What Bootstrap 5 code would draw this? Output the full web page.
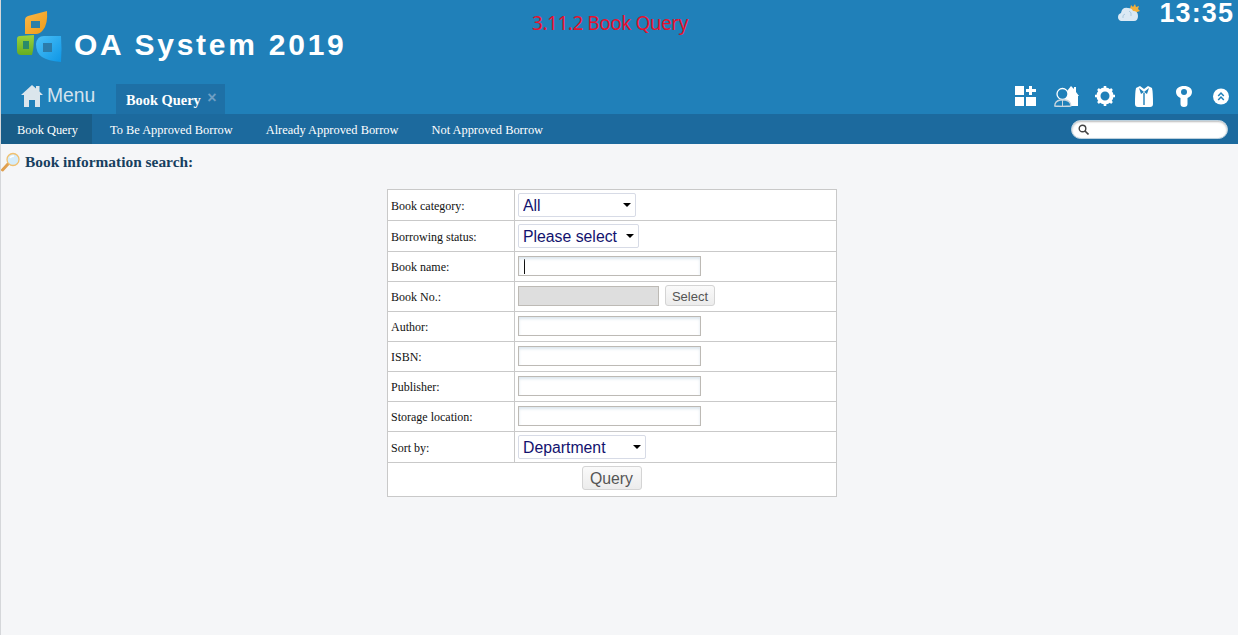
<!DOCTYPE html>
<html lang="en">
<head>
<meta charset="utf-8">
<title>OA System 2019</title>
<link href="https://cdn.jsdelivr.net/npm/bootstrap@5.3.0/dist/css/bootstrap.min.css" rel="stylesheet">
<style>
html,body{height:100%;}
body{background:#f5f6f8;border-left:1px solid #d5d7da;font-family:"Liberation Serif",serif;overflow:hidden;}
.oa-head{background:#2080b9;height:114px;margin-left:-1px;position:relative;}
.oa-top{height:84px;}
.oa-logo{margin-left:15px;margin-top:10px;width:48px;height:54px;flex:none;}
.oa-title{font:bold 30px/1 "Liberation Sans",sans-serif;letter-spacing:2.75px;color:#fff;margin-left:11px;margin-top:30px;white-space:nowrap;}
.oa-note{position:absolute;left:532px;top:11px;color:#e8112d;font:19px/24px "Noto Sans",sans-serif;letter-spacing:-.47px;}
.oa-clock{font:bold 27px/1 "Liberation Sans",sans-serif;letter-spacing:1.1px;color:#fff;margin:0 4px 0 0;}
.oa-weather{width:22px;height:17px;margin-right:19px;margin-top:4px;}
.oa-tabs{height:30px;}
.oa-menu{margin-left:21px;width:95px;color:#d5e3ee;font:19.3px/1 "Liberation Sans",sans-serif;gap:4px;padding-bottom:6px;}
.oa-tab{background:#1e70a6;width:109px;height:30px;padding-left:10px;color:#fff;font:bold 14.4px/33px "Liberation Serif",serif;white-space:nowrap;}
.oa-tab span{color:#6f9fc4;font:bold 16px/1 "Liberation Sans",sans-serif;margin-left:3px;position:relative;top:-2px;}
.oa-tools{height:30px;padding-bottom:6px;}
.oa-tools svg{display:block;}
.oa-sub{background:#1c6a9e;height:30px;margin-left:-1px;}
.oa-sub a{color:#fff;text-decoration:none;font-size:12.4px;line-height:32px;height:30px;white-space:nowrap;}
.oa-sub a.oa-on{background:#195d88;width:92px;padding-left:17px;margin-right:18px;}
.oa-sub a.oa-it2{margin-right:33px;}
.oa-search{width:157px;height:19px;border-radius:10px;background:#fff;border:1px solid #bcd0dd;box-shadow:inset 0 1px 2px #bbb;margin-right:10px;padding-left:6px;}
.oa-heading{height:36px;color:#173f5f;font:bold 15.4px/1 "Liberation Serif",serif;gap:4px;}
.oa-wrap{width:450px;margin-left:386px;margin-top:9px;}
.oa-form{width:450px;border-collapse:collapse;background:#fff;table-layout:fixed;}
.oa-form td{border:1px solid #c9c9c9;padding:0 3px;font-size:12px;color:#111;height:30px;vertical-align:middle;}
.oa-form tr.oa-tall td{height:31px;}
.oa-form tr.oa-tall td.oa-lab{padding-top:2px;}
.oa-form td.oa-lab{width:127px;}
.oa-sel{appearance:none;-webkit-appearance:none;display:block;height:24px;border:1px solid #d7dbe6;border-radius:2px;background:#fff url("data:image/svg+xml,%3Csvg xmlns='http://www.w3.org/2000/svg' width='8' height='4'%3E%3Cpath d='M0 0h8L4 4z' fill='%23000'/%3E%3C/svg%3E") no-repeat right 4px center;color:#12126e;font:15.8px/20px "Liberation Sans",sans-serif;padding:2px 0 0 4px;}
.oa-in{display:block;width:183px;height:20px;border:1px solid #bdbab5;background:#fff;box-shadow:inset 0 2px 3px #dce6ee;padding:0 4px;border-radius:0;margin-bottom:2px;}
.oa-caret{background:linear-gradient(#111,#111) no-repeat 5px 2px/1px 15px #fff;}
.oa-row2{margin-bottom:2px;}
.oa-row2 .oa-in{margin-bottom:0;}
.oa-dis{width:141px;background:#dedede;box-shadow:none;}
.oa-btn{border:1px solid #d4d4d4;border-radius:3px;background:linear-gradient(#fafafa,#ececec);color:#555;font:13px/1 "Liberation Sans",sans-serif;height:21px;width:50px;padding:1px 0 0;margin-left:6px;}
.oa-btn2{font-size:15.8px;width:60px;height:24px;margin:0 0 3px 2px;}
.oa-last{text-align:center;padding-left:0!important;height:34px!important;}
</style>
</head>
<body>
<header class="oa-head">
  <div class="oa-top d-flex">
    <svg class="oa-logo" viewBox="0 0 48 54" aria-hidden="true">
      <defs>
        <linearGradient id="oaOr" x1="0" y1="0" x2="1" y2="1"><stop offset="0" stop-color="#f8b84a"/><stop offset="1" stop-color="#f09a14"/></linearGradient>
        <linearGradient id="oaGr" x1="0" y1="0" x2="0" y2="1"><stop offset="0" stop-color="#9ad23f"/><stop offset="1" stop-color="#66ad22"/></linearGradient>
        <linearGradient id="oaBl" x1="0" y1="0" x2="1" y2="1"><stop offset="0" stop-color="#4cc0f7"/><stop offset="1" stop-color="#0d96e6"/></linearGradient>
      </defs>
      <path d="M10 10 Q10 7 13 6 L32 1 Q33 14 28 20 Q25 24 21 24 L10 24 Z" fill="url(#oaOr)"/>
      <rect x="16" y="11" width="9" height="7" fill="#2a7fa8"/>
      <path d="M2 29 Q2 26 5 26 L19 25 Q19 38 17 45 L6 45 Q2 45 2 41Z" fill="url(#oaGr)"/>
      <rect x="8" y="31" width="6" height="8" fill="#2a8a6a"/>
      <path d="M21 34 Q22 26 29 26 L46 26 Q47 38 46 52 Q33 51 27 47 Q21 43 21 34Z" fill="url(#oaBl)"/>
      <rect x="28" y="33" width="9" height="9" fill="#2b7cab"/>
    </svg>
    <div class="oa-title">OA System 2019</div>
    <div class="ms-auto d-flex align-items-start">
      <svg class="oa-weather" viewBox="0 0 22 17" aria-hidden="true">
        <path d="M12 5l1-4 2 2 2-3 1 3 3-1-1 3 2 2-3 1-2 3z" fill="#f4b13c"/>
        <path d="M3 17 Q0 16 0 13 Q0 10 3 9 Q4 3 10 4 Q14 4 15 7 Q20 7 20 12 Q20 17 16 17Z" fill="#dbe9f4"/>
        <path d="M5 14 Q4 11 7 10 M11 7 Q14 8 13 12" fill="none" stroke="#a9c9e0" stroke-width="1"/>
      </svg>
      <div class="oa-clock">13:35</div>
    </div>
  </div>
  <div class="oa-note">3.11.2 Book Query</div>
  <div class="oa-tabs d-flex align-items-end">
    <div class="oa-menu d-flex align-items-center">
      <svg width="22" height="24" viewBox="0 0 22 24" aria-hidden="true"><path d="M11 1 L15 4.500V2h3.500v5.500L22 11h-3v12h-5v-7H8v7H3V11H0Z" fill="#dbe5ec"/></svg>
      <span>Menu</span>
    </div>
    <div class="oa-tab">Book Query <span>×</span></div>
    <div class="oa-tools ms-auto d-flex align-items-center">
      <svg width="21" height="20" viewBox="0 0 21 20" style="margin-right:18px" aria-hidden="true"><path d="M0 0h9v9H0zM0 11h9v9H0zM11 11h10v9H11zM14 0h3v3h4v3h-4v3h-3V6h-3V3h3z" fill="#fff"/></svg>
      <svg width="25" height="21" viewBox="0 0 25 21" style="margin-right:16px" aria-hidden="true"><path d="M10 9l7-9 3 3V1h2v5l3 4h-1v10H11z" fill="#fff"/><circle cx="8.500" cy="8" r="5.500" fill="#2080b9" stroke="#fff" stroke-width="1.300"/><path d="M.8 20q0-5 5.500-6h5q5.500 1 5.500 6q-8 1-16.500 0z" fill="#2080b9" stroke="#c9d6df" stroke-width="1.300"/><path d="M8.500 14v6" stroke="#c9d6df"/></svg>
      <svg width="20" height="20" viewBox="0 0 20 20" style="margin-right:20px" aria-hidden="true"><circle cx="10" cy="10" r="6.500" fill="none" stroke="#fff" stroke-width="4"/><path d="M10 10V0M10 10V20M10 10H0M10 10H20M10 10L3 3M10 10L17 3M10 10L3 17M10 10L17 17" stroke="#fff" stroke-width="2.600" stroke-dasharray="3 7" stroke-dashoffset="-7"/></svg>
      <svg width="18" height="21" viewBox="0 0 18 21" style="margin-right:23px" aria-hidden="true"><path d="M5 0L9 3l4-3 4 2q1 4 1 16 0 3-3 3H3q-3 0-3-3Q0 6 1 2z" fill="#fff"/><path d="M4 2l5 4 5-4-2 6-3-2-3 2zM8.300 7h1.400v12H8.300z" fill="#2080b9"/></svg>
      <svg width="16" height="21" viewBox="0 0 16 21" style="margin-right:21px" aria-hidden="true"><path d="M8 0C13 0 16 2.500 16 6C16 9 14 11 11.500 12V18Q11.500 21 8 21Q4.500 21 4.500 18V12C2 11 0 9 0 6C0 2.500 3 0 8 0Z" fill="#fff"/><circle cx="8" cy="6" r="3" fill="#2080b9"/></svg>
      <svg width="16" height="17" viewBox="0 0 16 17" style="margin-right:9px" aria-hidden="true"><circle cx="8" cy="8.500" r="8" fill="#fff"/><path d="M5.200 8l2.800-3 2.800 3M5.200 12l2.800-3 2.800 3" fill="none" stroke="#2080b9" stroke-width="1.500"/></svg>
    </div>
  </div>
</header>
<nav class="oa-sub d-flex align-items-center">
  <a class="oa-on" href="#">Book Query</a>
  <a class="oa-it2" href="#">To Be Approved Borrow</a>
  <a class="oa-it2" href="#">Already Approved Borrow</a>
  <a href="#">Not Approved Borrow</a>
  <div class="oa-search ms-auto d-flex align-items-center">
    <svg width="11" height="11" viewBox="0 0 11 11" aria-hidden="true"><circle cx="4.500" cy="4.500" r="3.300" fill="none" stroke="#444" stroke-width="1.400"/><path d="M7 7l3.500 3.500" stroke="#444" stroke-width="1.600"/></svg>
  </div>
</nav>
<div class="oa-heading d-flex align-items-center">
  <svg width="20" height="20" viewBox="0 0 20 20" aria-hidden="true"><path d="M7 12L1.500 18" stroke="#e0a050" stroke-width="3" stroke-linecap="round"/><circle cx="12" cy="7.500" r="6" fill="#d5ecfa" stroke="#f0c070" stroke-width="1.300"/><path d="M9 6q1-2 4-2" fill="none" stroke="#fff" stroke-width="1.500"/></svg>
  <span>Book information search:</span>
</div>
<main class="oa-wrap">
  <table class="oa-form">
    <tr class="oa-tall"><td class="oa-lab">Book category:</td><td><select class="oa-sel" style="width:118px"><option>All</option></select></td></tr>
    <tr class="oa-tall"><td class="oa-lab">Borrowing status:</td><td><select class="oa-sel" style="width:121px"><option>Please select</option></select></td></tr>
    <tr><td class="oa-lab">Book name:</td><td><input class="oa-in oa-caret" type="text"></td></tr>
    <tr><td class="oa-lab">Book No.:</td><td><div class="oa-row2 d-flex align-items-center"><input class="oa-in oa-dis" type="text" disabled><button class="oa-btn" type="button">Select</button></div></td></tr>
    <tr><td class="oa-lab">Author:</td><td><input class="oa-in" type="text"></td></tr>
    <tr><td class="oa-lab">ISBN:</td><td><input class="oa-in" type="text"></td></tr>
    <tr><td class="oa-lab">Publisher:</td><td><input class="oa-in" type="text"></td></tr>
    <tr><td class="oa-lab">Storage location:</td><td><input class="oa-in" type="text"></td></tr>
    <tr class="oa-tall"><td class="oa-lab">Sort by:</td><td><select class="oa-sel" style="width:128px"><option>Department</option></select></td></tr>
    <tr><td class="oa-last" colspan="2"><button class="oa-btn oa-btn2" type="button">Query</button></td></tr>
  </table>
</main>
</body>
</html>
